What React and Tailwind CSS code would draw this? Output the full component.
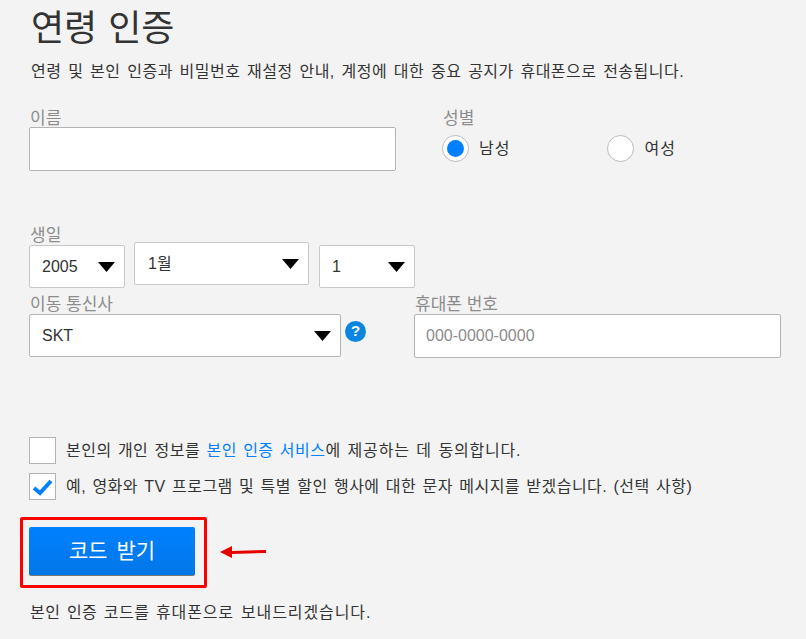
const Field = ({ className = '', children }) => (
  <div className={`flex items-center bg-white border rounded-[2px] ${className}`}>{children}</div>
);

const Caret = () => (
  <svg width="17" height="10" viewBox="0 0 17 10" className="shrink-0">
    <path d="M0 0H17L8.5 10Z" fill="#000" />
  </svg>
);

const Select = ({ value, className = '' }) => (
  <Field className={`justify-between pr-[9px] text-[16px] text-[#333] ${className}`}>
    <span>{value}</span>
    <Caret />
  </Field>
);

const Label = ({ children, className = '' }) => (
  <div className={`h-[20px] text-[17px] leading-[20px] text-[#8c8c8c] ${className}`}>{children}</div>
);

const Radio = ({ checked, label, className = '' }) => (
  <div className={`flex items-center gap-[10px] ${className}`}>
    <div className="w-[27px] h-[27px] rounded-full bg-white border border-[#bbb] flex items-center justify-center">
      {checked && <div className="w-[17px] h-[17px] rounded-full bg-[#0080ff]" />}
    </div>
    <span className="text-[16px] tracking-[1px] text-[#333]">{label}</span>
  </div>
);

const Check = ({ checked, children, className = '' }) => (
  <div className={`flex items-center gap-[10px] ${className}`}>
    <div className="w-[27px] h-[27px] bg-white border border-[#b3b3b3] flex items-center justify-center">
      {checked && (
        <svg width="21" height="18" viewBox="0 0 21 18">
          <path d="M2 10L8 15L19 3" fill="none" stroke="#0080ff" strokeWidth="4" />
        </svg>
      )}
    </div>
    <span className="text-[16px] tracking-[0.47px] [word-spacing:1.4px] text-[#333]">{children}</span>
  </div>
);

export default function App() {
  return (
    <div className="w-[806px] h-[639px] overflow-hidden bg-[#f3f3f3] pl-[29px] font-['Liberation_Sans','Noto_Sans_CJK_KR',sans-serif]">
      <h1 className="pt-[7px] pl-[2px] text-[36px] leading-[44px] [word-spacing:1px] text-[#333]">연령 인증</h1>
      <p className="mt-[10px] pl-[2px] text-[16px] leading-[22px] tracking-[0.47px] [word-spacing:1.85px] text-[#333]">
        연령 및 본인 인증과 비밀번호 재설정 안내, 계정에 대한 중요 공지가 휴대폰으로 전송됩니다.
      </p>

      <div className="mt-[24px] flex h-[118px]">
        <div className="w-[367px]">
          <Label className="pl-[1px] pt-[2px]">이름</Label>
          <Field className="h-[44px] border-[#b3b3b3]" />
        </div>
        <div className="ml-[46px]">
          <Label className="pl-[1px] pt-[2px]">성별</Label>
          <div className="flex mt-[8px]">
            <Radio checked label="남성" />
            <Radio label="여성" className="ml-[97px]" />
          </div>
        </div>
      </div>

      <Label className="pl-[1px] pt-[2px] mt-[-1px]">생일</Label>
      <div className="flex items-start h-[52px]">
        <Select value="2005" className="w-[96px] h-[43px] pl-[12px] mt-[1px] border-[#c8c8c8]" />
        <Select value="1월" className="w-[175px] h-[43px] pl-[13px] ml-[9px] mt-[-2px] border-[#c8c8c8]" />
        <Select value="1" className="w-[96px] h-[43px] pl-[12px] ml-[10px] mt-[1px] border-[#c8c8c8]" />
      </div>

      <div className="flex items-start">
        <div className="w-[312px]">
          <Label className="pl-[1px] mt-[-1px]">이동 통신사</Label>
          <Select value="SKT" className="h-[43px] pl-[12px] mt-[-1px] border-[#b3b3b3]" />
        </div>
        <div className="ml-[4px] mt-[25px] w-[21px] h-[21px] rounded-full bg-[#0a85e0] flex items-center justify-center text-white text-[15px] font-bold">?</div>
        <div className="ml-[48px] w-[367px]">
          <Label className="pl-[1px] mt-[-1px]">휴대폰 번호</Label>
          <Field className="h-[44px] mt-[-1px] pl-[11px] text-[16px] text-[#8c8c8c] border-[#b3b3b3]">000-0000-0000</Field>
        </div>
      </div>

      <Check className="mt-[79px]">
        본인의 개인 정보를 <span className="text-[#0080ff]">본인 인증 서비스</span><span className="tracking-[0.8px]">에 제공하는 데 동의합니다.</span>
      </Check>
      <Check checked className="mt-[9px]">
        예, 영화와 TV 프로그램 및 특별 할인 행사에 대한 문자 메시지를 받겠습니다. (선택 사항)
      </Check>

      <div className="flex items-center mt-[17px] ml-[-9px]">
        <div className="border-[3px] border-[#f00] rounded-[2px] pl-[6px] pt-[7px] pb-[9px] pr-[9px]">
          <div className="w-[166px] h-[49px] flex items-center justify-center rounded-[2px] bg-gradient-to-b from-[#0080ff] to-[#0277e8] border-b border-[#777] text-white text-[21px] [word-spacing:3px]">
            코드 받기
          </div>
        </div>
        <svg width="46" height="14" viewBox="0 0 46 14" className="ml-[13px] mt-[-1px]">
          <path d="M0 7L12 1V6L46 5V8L12 9V13Z" fill="#e60000" />
        </svg>
      </div>

      <p className="mt-[14px] pl-[1px] text-[16px] leading-[22px] tracking-[0.47px] [word-spacing:1.6px] text-[#333]">
        본인 인증 코드를 <span className="tracking-[0.9px]">휴대폰으로 보내드리겠습니다.</span>
      </p>
    </div>
  );
}
